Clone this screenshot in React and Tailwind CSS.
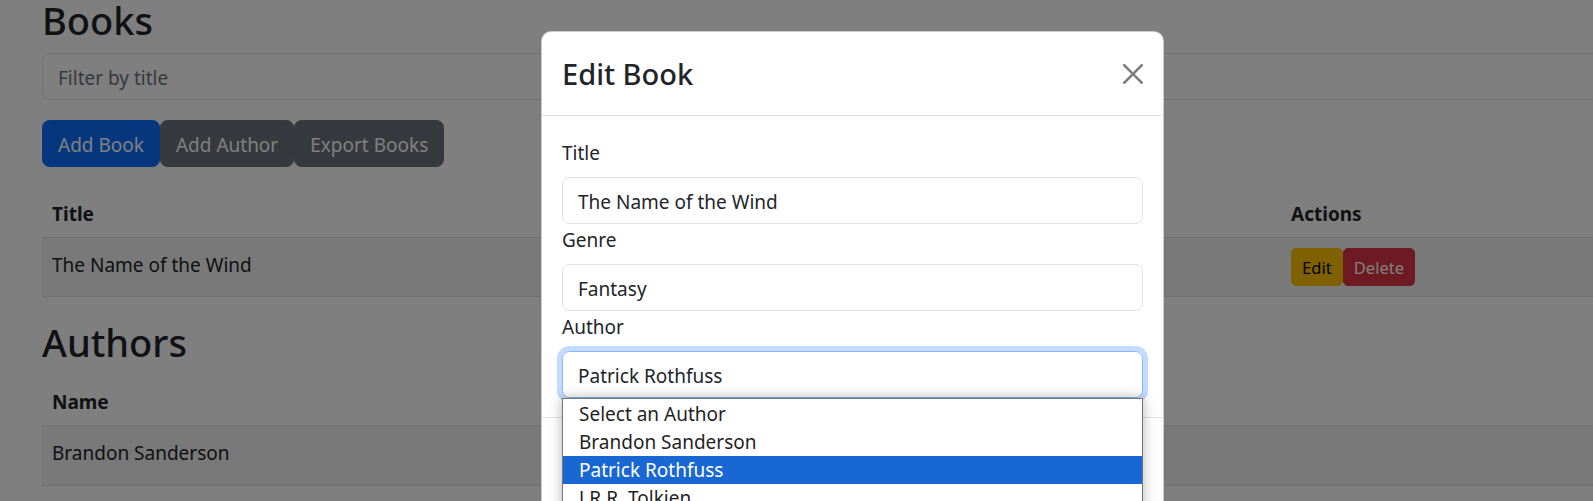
import React from "react";

function SmBtn({ kind, children }) {
  const cls =
    kind === "edit"
      ? "bg-[#ffc107] border-[#ffc107] text-black"
      : "bg-[#dc3545] border-[#dc3545] text-white";
  return (
    <button
      className={`h-[38px] px-[10px] pt-[2px] border text-[16.6px] leading-[26px] rounded-[5px] ${cls}`}
    >
      {children}
    </button>
  );
}

function BigBtn({ kind, children }) {
  const cls =
    kind === "primary"
      ? "bg-[#0d6efd] border-[#0d6efd]"
      : "bg-[#6c757d] border-[#6c757d]";
  return (
    <button
      className={`h-[47px] px-[15px] pt-[2px] border text-white text-[19px] leading-[30px] rounded-[7.5px] ${cls}`}
    >
      {children}
    </button>
  );
}

export default function App() {
  return (
    <div className="relative w-[1593px] h-[501px] overflow-hidden bg-white text-[#212529] font-['Noto_Sans',sans-serif]">
      {/* Page */}
      <div className="w-[1700px] pl-[42px]">
        <h2 className="mt-[-4px] mb-[9px] text-[38px] leading-[48px] font-medium">Books</h2>
        <input
          placeholder="Filter by title"
          className="block w-full h-[47px] px-[15px] pt-[2px] border border-[#dee2e6] rounded-[7.5px] text-[19px] bg-white placeholder:text-[#6c757d] outline-none"
        />
        <div className="flex mt-[20px]">
          <BigBtn kind="primary">Add Book</BigBtn>
          <BigBtn kind="secondary">Add Author</BigBtn>
          <BigBtn kind="secondary">Export Books</BigBtn>
        </div>

        {/* Books table */}
        <div className="mt-[20px] text-[19px] leading-[30px]">
          <div className="grid grid-cols-[558px_350px_331px_1fr] border-b border-[#dee2e6] font-bold">
            <div className="px-[10px] pt-[12px] pb-[8px]">Title</div>
            <div className="px-[10px] pt-[12px] pb-[8px]"></div>
            <div className="px-[10px] pt-[12px] pb-[8px]"></div>
            <div className="px-[10px] pt-[12px] pb-[8px]">Actions</div>
          </div>
          <div className="grid grid-cols-[558px_350px_331px_1fr] items-start border-b border-[#dee2e6] bg-black/5">
            <div className="px-[10px] pt-[12px]">The Name of the Wind</div>
            <div className="px-[10px] pt-[12px]"></div>
            <div className="px-[10px] pt-[12px]"></div>
            <div className="p-[10px] flex">
              <SmBtn kind="edit">Edit</SmBtn>
              <SmBtn kind="delete">Delete</SmBtn>
            </div>
          </div>
        </div>

        <h2 className="mt-[21px] mb-[9px] text-[38px] leading-[48px] font-medium">Authors</h2>

        {/* Authors table */}
        <div className="text-[19px] leading-[30px]">
          <div className="grid grid-cols-[658px_1fr] border-b border-[#dee2e6] font-bold">
            <div className="px-[10px] pt-[12px] pb-[8px]">Name</div>
            <div className="px-[10px] pt-[12px] pb-[8px]"></div>
          </div>
          {["Brandon Sanderson", "Patrick Rothfuss", "J.R.R. Tolkien"].map((n, i) => (
            <div
              key={n}
              className={`grid grid-cols-[658px_1fr] items-start h-[60px] border-b border-[#dee2e6] ${
                i % 2 === 0 ? "bg-black/5" : ""
              }`}
            >
              <div className="px-[10px] pt-[12px]">{n}</div>
              <div className="p-[10px]"></div>
            </div>
          ))}
        </div>
      </div>

      {/* Backdrop */}
      <div className="absolute inset-0 bg-black/50" />

      {/* Modal */}
      <div className="absolute left-[541px] top-[31px] w-[623px] h-[520px] bg-white border border-black/20 rounded-[10px] text-[19px] leading-[30px]">
        <div className="flex items-center justify-between h-[84px] px-[20px] border-b border-[#dee2e6]">
          <h4 className="text-[29px] leading-[45px] font-medium">Edit Book</h4>
          <svg width="20" height="20" viewBox="0 0 16 16" className="opacity-50">
            <path
              fill="#000"
              d="M.293.293a1 1 0 0 1 1.414 0L8 6.586 14.293.293a1 1 0 1 1 1.414 1.414L9.414 8l6.293 6.293a1 1 0 0 1-1.414 1.414L8 9.414l-6.293 6.293a1 1 0 0 1-1.414-1.414L6.586 8 .293 1.707a1 1 0 0 1 0-1.414z"
            />
          </svg>
        </div>
        <div className="px-[20px] pt-[21px] pb-[19px]">
          <label className="block pt-[1px] mb-[9px]">Title</label>
          <div className="h-[47px] px-[15px] pt-[2px] flex items-center border border-[#dee2e6] rounded-[7.5px]">
            The Name of the Wind
          </div>
          <label className="block pt-[1px] mb-[9px]">Genre</label>
          <div className="h-[47px] px-[15px] pt-[2px] flex items-center border border-[#dee2e6] rounded-[7.5px]">
            Fantasy
          </div>
          <label className="block pt-[1px] mb-[9px]">Author</label>
          <div className="h-[47px] px-[15px] pt-[2px] flex items-center border border-[#86b7fe] rounded-[7.5px] shadow-[0_0_0_5px_rgba(13,110,253,0.25)]">
            Patrick Rothfuss
          </div>
        </div>
        <div className="h-[80px] border-t border-[#dee2e6]" />
      </div>

      {/* Native select popup */}
      <div className="absolute left-[562px] top-[398px] w-[581px] h-[140px] pt-[1px] bg-white border border-[#767676] shadow-[0_0_12px_rgba(0,0,0,0.3)] text-[19px] leading-[28px] text-[#1f1f1f]">
        <div className="pl-[16px]">Select an Author</div>
        <div className="pl-[16px]">Brandon Sanderson</div>
        <div className="pl-[16px] bg-[#1967d2] text-white">Patrick Rothfuss</div>
        <div className="pl-[16px]">J.R.R. Tolkien</div>
      </div>
    </div>
  );
}
